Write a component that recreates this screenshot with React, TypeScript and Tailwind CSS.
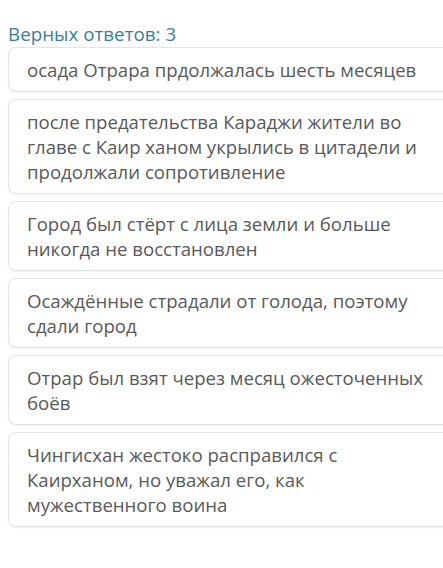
import React from "react";

const answers: string[] = [
  "осада Отрара прдолжалась шесть месяцев",
  "после предательства Караджи жители во главе с Каир ханом укрылись в цитадели и продолжали сопротивление",
  "Город был стёрт с лица земли и больше никогда не восстановлен",
  "Осаждённые страдали от голода, поэтому сдали город",
  "Отрар был взят через месяц ожесточенных боёв",
  "Чингисхан жестоко расправился с Каирханом, но уважал его, как мужественного воина",
];

const App: React.FC = () => {
  return (
    <div
      className="w-[443px] h-[568px] overflow-hidden bg-white"
      style={{ fontFamily: '"Open Sans", "Noto Sans", sans-serif' }}
    >
      <div className="pt-[22px] pl-2">
        {/* Header */}
        <div className="text-[18.8px] leading-[24px] text-[#3c7e99] mb-[1px]">
          Верных ответов: 3
        </div>

        {/* Answers list */}
        <div className="flex flex-col gap-[7px]">
          {answers.map((text, index) => (
            <div
              key={index}
              className="w-[452px] shrink-0 rounded-lg border border-[#e4e4e4] bg-white shadow-[0_1px_2px_rgba(0,0,0,0.06)] pl-[18px] pr-[28px] py-[9px]"
            >
              <p className="text-[18.6px] leading-[25px] text-[#595959]">{text}</p>
            </div>
          ))}
        </div>
      </div>
    </div>
  );
};

export default App;
